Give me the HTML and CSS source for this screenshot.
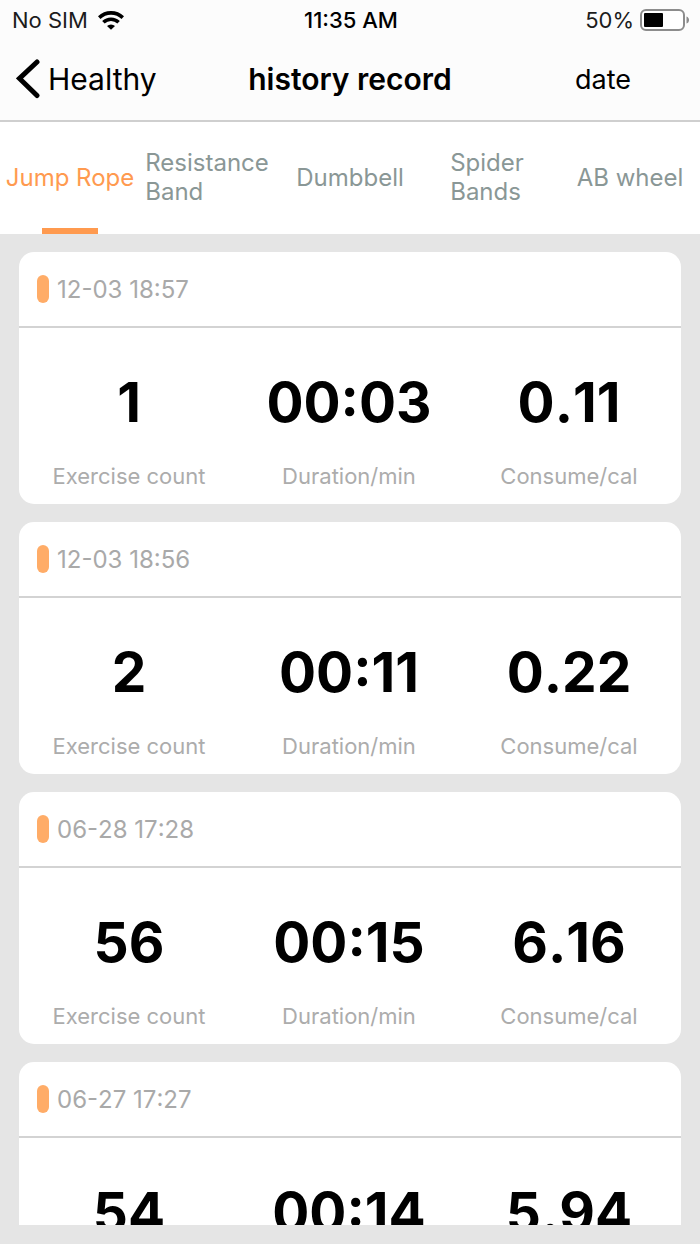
FILE: index.html
```html
<!DOCTYPE html>
<html lang="en">
<head>
<meta charset="utf-8">
<meta name="viewport" content="width=device-width, initial-scale=1">
<title>history record</title>
<link rel="stylesheet" href="styles.css">
</head>
<body>
<div class="app">
  <header class="top">
    <div class="status">
      <div class="carrier">
        <span>No SIM</span>
        <svg class="wifi" viewBox="0 0 26 19" aria-hidden="true">
          <path d="M1.200 6.600a17 17 0 0 1 23.600 0M5.400 11.300a11 11 0 0 1 15.200 0" fill="none" stroke="#000" stroke-width="3.600"/>
          <path d="M9 15a5.800 5.800 0 0 1 8 0L13 18.800z"/>
        </svg>
      </div>
      <div class="clock">11:35 AM</div>
      <div class="battery">
        <span>50%</span>
        <svg class="cell" viewBox="0 0 50 22" aria-hidden="true">
          <rect x="1" y="1" width="43" height="20" rx="5" fill="#fff" stroke="#8c8c8c" stroke-width="2"/>
          <rect x="4" y="4" width="19" height="14" rx="1"/>
          <path d="M46.500 7.500c3.400 1 3.400 6 0 7z" fill="#8c8c8c"/>
        </svg>
      </div>
    </div>
    <div class="navbar">
      <button class="back" type="button">
        <svg class="chevron" viewBox="0 0 24 40" aria-hidden="true"><path d="M21 3L3.500 19.500L21 36.500" fill="none" stroke="#000" stroke-width="5" stroke-linecap="round" stroke-linejoin="miter"/></svg>
        <span>Healthy</span>
      </button>
      <h1 class="title">history record</h1>
      <button class="date" type="button">date</button>
    </div>
  </header>
  <nav class="tabs">
    <button class="tab tab-active" type="button">Jump Rope</button>
    <button class="tab tab-wrapped" type="button">Resistance<br>Band</button>
    <button class="tab" type="button">Dumbbell</button>
    <button class="tab tab-wrapped" type="button">Spider<br>Bands</button>
    <button class="tab" type="button">AB wheel</button>
  </nav>
  <main class="list">
    <article class="card">
      <h2 class="when">12-03 18:57</h2>
      <dl class="stats">
        <div class="stat"><dt>Exercise count</dt><dd>1</dd></div>
        <div class="stat"><dt>Duration/min</dt><dd>00:03</dd></div>
        <div class="stat"><dt>Consume/cal</dt><dd>0.11</dd></div>
      </dl>
    </article>
    <article class="card">
      <h2 class="when">12-03 18:56</h2>
      <dl class="stats">
        <div class="stat"><dt>Exercise count</dt><dd>2</dd></div>
        <div class="stat"><dt>Duration/min</dt><dd>00:11</dd></div>
        <div class="stat"><dt>Consume/cal</dt><dd>0.22</dd></div>
      </dl>
    </article>
    <article class="card">
      <h2 class="when">06-28 17:28</h2>
      <dl class="stats">
        <div class="stat"><dt>Exercise count</dt><dd>56</dd></div>
        <div class="stat"><dt>Duration/min</dt><dd>00:15</dd></div>
        <div class="stat"><dt>Consume/cal</dt><dd>6.16</dd></div>
      </dl>
    </article>
    <article class="card">
      <h2 class="when">06-27 17:27</h2>
      <dl class="stats">
        <div class="stat"><dt>Exercise count</dt><dd>54</dd></div>
        <div class="stat"><dt>Duration/min</dt><dd>00:14</dd></div>
        <div class="stat"><dt>Consume/cal</dt><dd>5.94</dd></div>
      </dl>
    </article>
  </main>
</div>
</body>
</html>
```

FILE: styles.css
```css
* {
  box-sizing: border-box;
  margin: 0;
}

body {
  font-family: Inter, "Liberation Sans", sans-serif;
  color: #000;
  background: #e5e5e5;
}

button {
  padding: 0;
  border: 0;
  background: none;
  font: inherit;
  color: inherit;
}

.app {
  display: flex;
  flex-direction: column;
  height: 100vh;
  padding-bottom: 19px;
}

.top {
  flex: none;
  background: #fcfcfc;
  border-bottom: 2px solid #cfcfcf;
}

.status,
.navbar {
  display: grid;
  grid-template-columns: 1fr auto 1fr;
  align-items: center;
}

.status {
  height: 40px;
  padding: 0 10px 0 12px;
  font-size: 22px;
}

.carrier,
.battery {
  display: flex;
  align-items: center;
  gap: 10px;
  color: #1c1c1c;
}

.battery {
  justify-content: flex-end;
  gap: 6px;
}

.clock {
  font-weight: 500;
}

.wifi {
  width: 26px;
  height: 19px;
}

.cell {
  width: 50px;
  height: 22px;
}

.navbar {
  height: 80px;
  padding: 0 16px 2px;
  font-size: 30px;
}

.back {
  display: flex;
  align-items: center;
  justify-self: start;
  gap: 8px;
}

.chevron {
  width: 24px;
  height: 40px;
}

.title {
  font-size: 30px;
  font-weight: 600;
}

.date {
  justify-self: end;
  padding-right: 53px;
  font-size: 27px;
}

.tabs {
  flex: none;
  display: grid;
  grid-template-columns: repeat(5, 1fr);
  height: 112px;
  background: #fff;
}

.tab {
  padding-bottom: 2px;
  font-size: 24px;
  line-height: 29px;
  color: #8a9796;
  white-space: nowrap;
}

.tab-wrapped {
  justify-self: center;
  padding-right: 6px;
  text-align: left;
}

.tab-active {
  color: #ff9a4f;
  background: linear-gradient(#ff9a4f, #ff9a4f) bottom / 56px 6px no-repeat;
}

.list {
  flex: 1;
  min-height: 0;
  display: flex;
  flex-direction: column;
  gap: 18px;
  padding: 18px 19px 0;
  overflow-y: auto;
  scrollbar-width: none;
}

.card {
  flex: none;
  border-radius: 15px;
  background: #fff;
}

.when {
  display: flex;
  align-items: center;
  gap: 8px;
  height: 76px;
  padding: 0 18px;
  border-bottom: 2px solid #d3d3d3;
  font-size: 24px;
  font-weight: 400;
  font-kerning: none;
  color: #a9a9a9;
}

.when::before {
  content: "";
  width: 12px;
  height: 28px;
  border-radius: 6px;
  background: #ffac67;
}

.stats {
  display: grid;
  grid-template-columns: repeat(3, 1fr);
  padding: 40px 2px 14px 0;
}

.stat {
  display: flex;
  flex-direction: column-reverse;
  align-items: center;
  gap: 26px;
}

.stat dt {
  font-size: 22px;
  line-height: 28px;
  color: #acacac;
}

.stat dd {
  font-size: 55px;
  line-height: 68px;
  font-weight: 700;
  font-kerning: none;
}
```
